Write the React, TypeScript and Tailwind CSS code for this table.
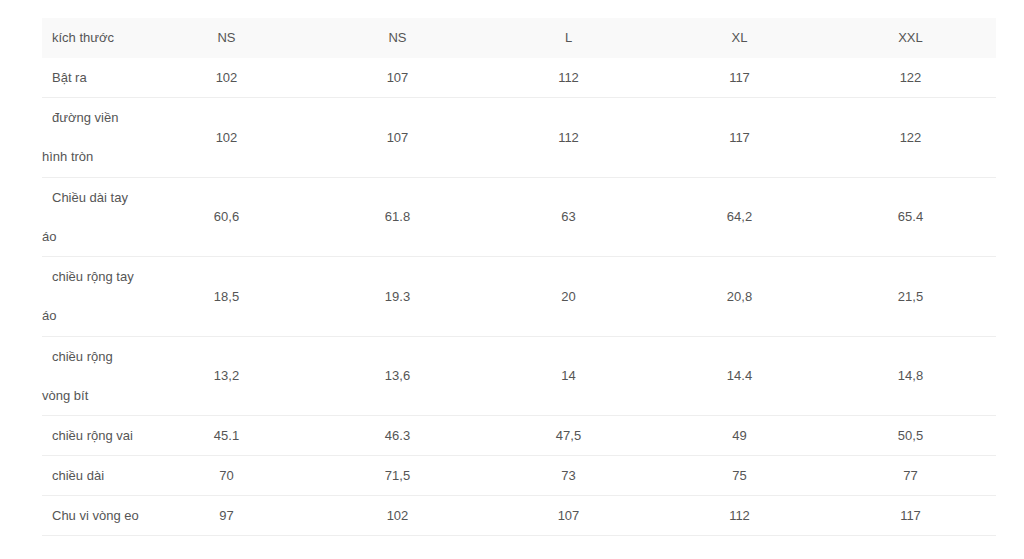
const sizes = ["NS", "NS", "L", "XL", "XXL"];

const rows: { label: string; values: string[]; tall?: boolean }[] = [
  { label: "Bật ra", values: ["102", "107", "112", "117", "122"] },
  { label: "đường viền hình tròn", values: ["102", "107", "112", "117", "122"], tall: true },
  { label: "Chiều dài tay áo", values: ["60,6", "61.8", "63", "64,2", "65.4"], tall: true },
  { label: "chiều rộng tay áo", values: ["18,5", "19.3", "20", "20,8", "21,5"], tall: true },
  { label: "chiều rộng vòng bít", values: ["13,2", "13,6", "14", "14.4", "14,8"], tall: true },
  { label: "chiều rộng vai", values: ["45.1", "46.3", "47,5", "49", "50,5"] },
  { label: "chiều dài", values: ["70", "71,5", "73", "75", "77"] },
  { label: "Chu vi vòng eo", values: ["97", "102", "107", "112", "117"] },
];

export default function App() {
  return (
    <div className="min-h-screen bg-white pt-[18px] font-['Liberation_Sans',Arial,sans-serif] text-[13px] text-[#555]">
      <table className="ml-[42px] w-[954px] table-fixed border-collapse">
        <colgroup>
          <col className="w-[99px]" />
          <col />
          <col />
          <col />
          <col />
          <col />
        </colgroup>
        <thead>
          <tr className="bg-[#f9f9f9]">
            <th className="h-[40px] p-0 text-left font-normal leading-[40px] indent-[10px]">
              kích thước
            </th>
            {sizes.map((s, i) => (
              <th key={i} className="h-[40px] p-0 text-center font-normal leading-[40px]">
                {s}
              </th>
            ))}
          </tr>
        </thead>
        <tbody>
          {rows.map((r) => (
            <tr
              key={r.label}
              className={
                r.tall
                  ? "border-b border-[#eeeeee] leading-[39.25px]"
                  : "border-b border-[#eeeeee] leading-[39px]"
              }
            >
              <td className="p-0 text-left align-middle indent-[10px]">{r.label}</td>
              {r.values.map((v, i) => (
                <td key={i} className="p-0 text-center align-middle">
                  {v}
                </td>
              ))}
            </tr>
          ))}
        </tbody>
      </table>
    </div>
  );
}
